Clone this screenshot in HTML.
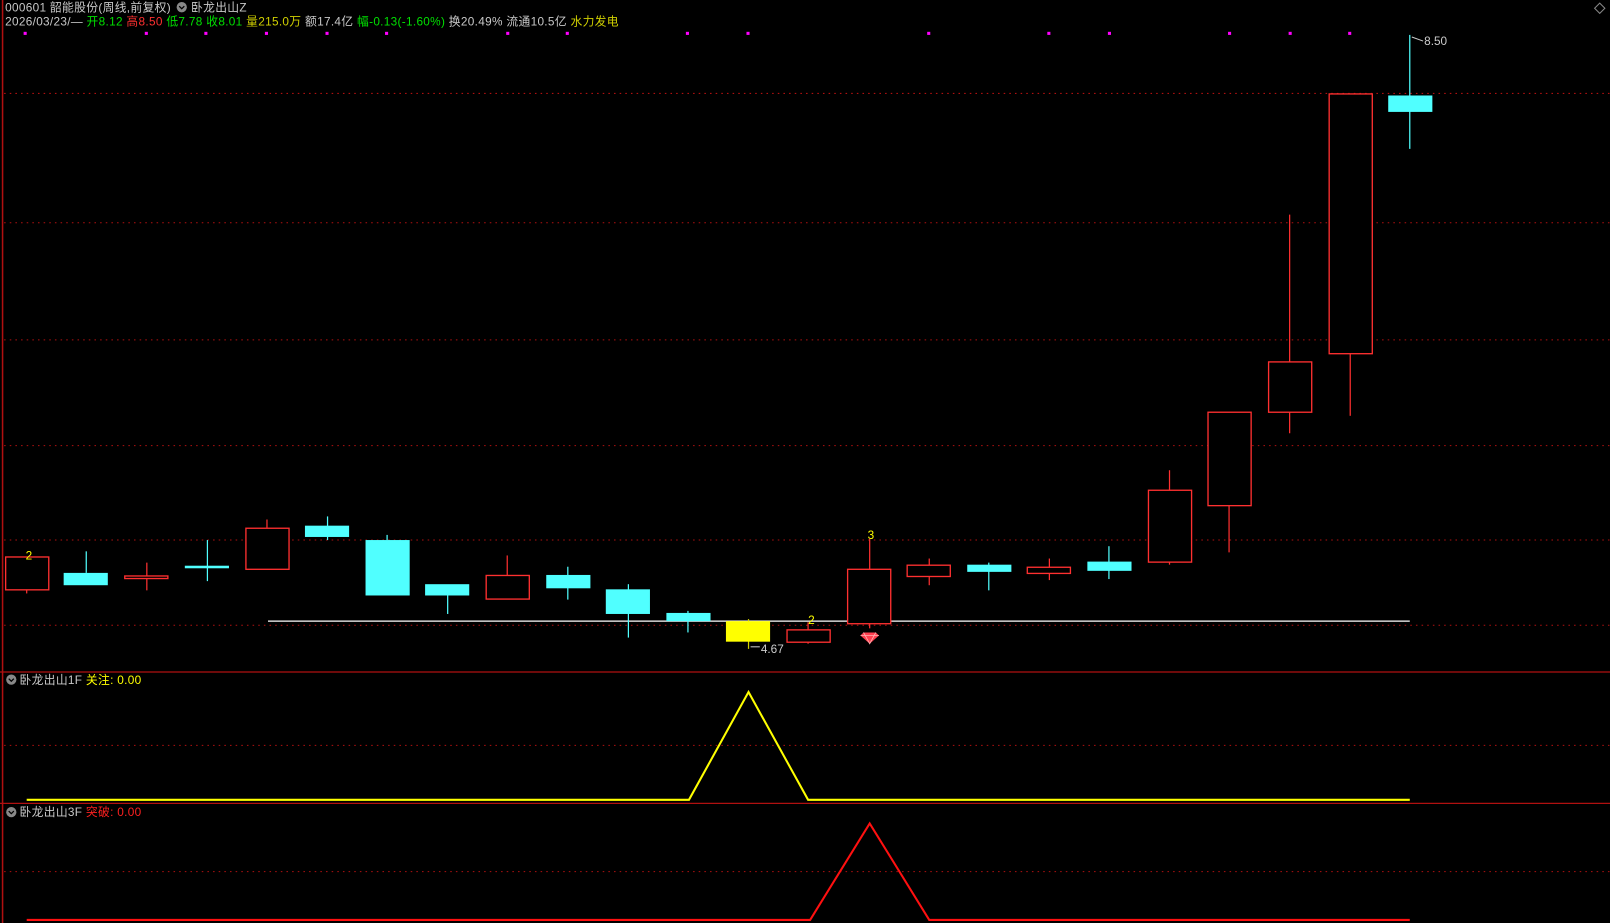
<!DOCTYPE html>
<html><head><meta charset="utf-8"><style>
html,body{margin:0;padding:0;background:#000;overflow:hidden}
svg{display:block}
text{font-family:"Liberation Sans","Noto Sans CJK SC",sans-serif;font-size:11.5px}
.hd{letter-spacing:0.3px}
</style></head><body>
<svg width="1610" height="923" viewBox="0 0 1568 899" preserveAspectRatio="none" xmlns="http://www.w3.org/2000/svg">
<rect width="1568" height="899" fill="#000"/>
<line x1="2.5" y1="0" x2="2.5" y2="899" stroke="#b01010" stroke-width="1.5"/>
<g stroke="#b01010" stroke-width="1" stroke-dasharray="1.5,4">
<line x1="4" y1="91" x2="1568" y2="91"/>
<line x1="4" y1="217" x2="1568" y2="217"/>
<line x1="4" y1="331" x2="1568" y2="331"/>
<line x1="4" y1="434" x2="1568" y2="434"/>
<line x1="4" y1="526" x2="1568" y2="526"/>
<line x1="4" y1="609" x2="1568" y2="609"/>
<line x1="4" y1="726" x2="1568" y2="726"/>
<line x1="4" y1="849" x2="1568" y2="849"/>
</g>
<line x1="0" y1="654.5" x2="1568" y2="654.5" stroke="#b01010" stroke-width="1.2"/>
<line x1="0" y1="782.5" x2="1568" y2="782.5" stroke="#b01010" stroke-width="1.2"/>
<text class="hd" x="5" y="11" fill="#c8c8c8">000601 韶能股份(周线,前复权)</text>
<circle cx="177" cy="7" r="5" fill="#888"/><path d="M174.5 6 L177 8.5 L179.5 6" stroke="#000" fill="none" stroke-width="1.2"/>
<text class="hd" x="186" y="11" fill="#c8c8c8">卧龙出山Z</text>
<text class="hd" x="5" y="25" fill="#c8c8c8">2026/03/23/—<tspan fill="#00e000"> 开8.12</tspan><tspan fill="#ff3030"> 高8.50</tspan><tspan fill="#00e000"> 低7.78</tspan><tspan fill="#00e000"> 收8.01</tspan><tspan fill="#d0d000"> 量215.0万</tspan><tspan fill="#c8c8c8"> 额17.4亿</tspan><tspan fill="#00e000"> 幅-0.13(-1.60%)</tspan><tspan fill="#c8c8c8"> 换20.49% 流通10.5亿</tspan><tspan fill="#d0d000"> 水力发电</tspan></text>
<path d="M1558 3 L1563 8 L1558 13 L1553 8 Z" fill="none" stroke="#888"/>
<g fill="#ff00ff">
<rect x="23" y="31" width="3" height="3"/><rect x="141" y="31" width="3" height="3"/><rect x="199" y="31" width="3" height="3"/><rect x="258" y="31" width="3" height="3"/><rect x="317" y="31" width="3" height="3"/><rect x="375" y="31" width="3" height="3"/><rect x="493" y="31" width="3" height="3"/><rect x="551" y="31" width="3" height="3"/><rect x="668" y="31" width="3" height="3"/><rect x="727" y="31" width="3" height="3"/><rect x="903" y="31" width="3" height="3"/><rect x="1020" y="31" width="3" height="3"/><rect x="1079" y="31" width="3" height="3"/><rect x="1196" y="31" width="3" height="3"/><rect x="1255" y="31" width="3" height="3"/><rect x="1313" y="31" width="3" height="3"/>
</g>
<line x1="261" y1="605" x2="1373" y2="605" stroke="#fff" stroke-width="1.2"/>
<g stroke-width="1.2">
<line x1="26" y1="574" x2="26" y2="578" stroke="#ff3030"/>
<line x1="84" y1="537" x2="84" y2="558" stroke="#50ffff"/>
<line x1="143" y1="548" x2="143" y2="575" stroke="#ff3030"/>
<line x1="202" y1="526" x2="202" y2="566" stroke="#50ffff"/>
<line x1="260" y1="506" x2="260" y2="514" stroke="#ff3030"/>
<line x1="319" y1="503" x2="319" y2="526" stroke="#50ffff"/>
<line x1="377" y1="521" x2="377" y2="526" stroke="#50ffff"/>
<line x1="436" y1="580" x2="436" y2="598" stroke="#50ffff"/>
<line x1="494" y1="541" x2="494" y2="560" stroke="#ff3030"/>
<line x1="553" y1="552" x2="553" y2="584" stroke="#50ffff"/>
<line x1="612" y1="569" x2="612" y2="621" stroke="#50ffff"/>
<line x1="670" y1="595" x2="670" y2="616" stroke="#50ffff"/>
<line x1="729" y1="603" x2="729" y2="632" stroke="#d0d000"/>
<line x1="787" y1="606" x2="787" y2="627" stroke="#ff3030"/>
<line x1="847" y1="525" x2="847" y2="612" stroke="#ff3030"/>
<line x1="905" y1="544" x2="905" y2="570" stroke="#ff3030"/>
<line x1="963" y1="548" x2="963" y2="575" stroke="#50ffff"/>
<line x1="1022" y1="544" x2="1022" y2="565" stroke="#ff3030"/>
<line x1="1080" y1="532" x2="1080" y2="564" stroke="#50ffff"/>
<line x1="1139" y1="458" x2="1139" y2="550" stroke="#ff3030"/>
<line x1="1197" y1="492" x2="1197" y2="538" stroke="#ff3030"/>
<line x1="1256" y1="209" x2="1256" y2="422" stroke="#ff3030"/>
<line x1="1315" y1="344" x2="1315" y2="405" stroke="#ff3030"/>
<line x1="1373" y1="34" x2="1373" y2="145" stroke="#50ffff"/>
</g>
<g fill="#000" stroke="#ff3030" stroke-width="1.3">
<rect x="5.5" y="542.5" width="42" height="32"/>
<rect x="121.5" y="561" width="42" height="2.5"/>
<rect x="239.5" y="514.5" width="42" height="40"/>
<rect x="473.5" y="560.5" width="42" height="23"/>
<rect x="766.5" y="613.5" width="42" height="12"/>
<rect x="825.5" y="554.5" width="42" height="53"/>
<rect x="883.5" y="550.5" width="42" height="11"/>
<rect x="1000.5" y="552.5" width="42" height="6"/>
<rect x="1118.5" y="477.5" width="42" height="70"/>
<rect x="1176.5" y="401.5" width="42" height="91"/>
<rect x="1235.5" y="352.5" width="42" height="49"/>
<rect x="1294.5" y="91.5" width="42" height="253"/>
</g>
<g fill="#50ffff">
<rect x="62" y="558" width="43" height="12"/>
<rect x="180" y="551" width="43" height="2.5"/>
<rect x="297" y="512" width="43" height="11"/>
<rect x="356" y="526" width="43" height="54"/>
<rect x="414" y="569" width="43" height="11"/>
<rect x="532" y="560" width="43" height="13"/>
<rect x="590" y="574" width="43" height="24"/>
<rect x="649" y="597" width="43" height="8"/>
<rect x="942" y="550" width="43" height="7"/>
<rect x="1059" y="547" width="43" height="9"/>
<rect x="1352" y="93" width="43" height="16"/>
</g>
<rect x="707" y="605" width="43" height="20" fill="#ffff00"/>
<text x="25" y="545" fill="#ffff00" font-size="11">2</text>
<text x="787" y="608" fill="#ffff00" font-size="11">2</text>
<text x="845" y="525" fill="#ffff00" font-size="11">3</text>
<path d="M731 630 L740 630" stroke="#ccc"/>
<text x="741" y="636" fill="#ccc" font-size="11">4.67</text>
<path d="M1375 36 L1386 40" stroke="#ccc"/>
<text x="1387" y="44" fill="#ccc" font-size="11">8.50</text>
<path d="M841 616 L853 616 L856 619 L847 627 L838 619 Z" fill="#ff4050"/>
<path d="M841 616 L847 627 L853 616 M838 619 L856 619" stroke="#ffb0b0" stroke-width="0.8" fill="none"/>
<circle cx="11" cy="662" r="5" fill="#888"/><path d="M8.5 661 L11 663.5 L13.5 661" stroke="#000" fill="none" stroke-width="1.2"/>
<text class="hd" x="19" y="666" fill="#c8c8c8">卧龙出山1F <tspan fill="#ffff00">关注: 0.00</tspan></text>
<polyline points="26,779 671,779 729,674 787,779 1373,779" fill="none" stroke="#ffff00" stroke-width="2"/>
<circle cx="11" cy="791" r="5" fill="#888"/><path d="M8.5 790 L11 792.5 L13.5 790" stroke="#000" fill="none" stroke-width="1.2"/>
<text class="hd" x="19" y="795" fill="#c8c8c8">卧龙出山3F <tspan fill="#ff2020">突破: 0.00</tspan></text>
<polyline points="26,896 789,896 847,802 905,896 1373,896" fill="none" stroke="#ff1010" stroke-width="2"/>
</svg>
</body></html>
